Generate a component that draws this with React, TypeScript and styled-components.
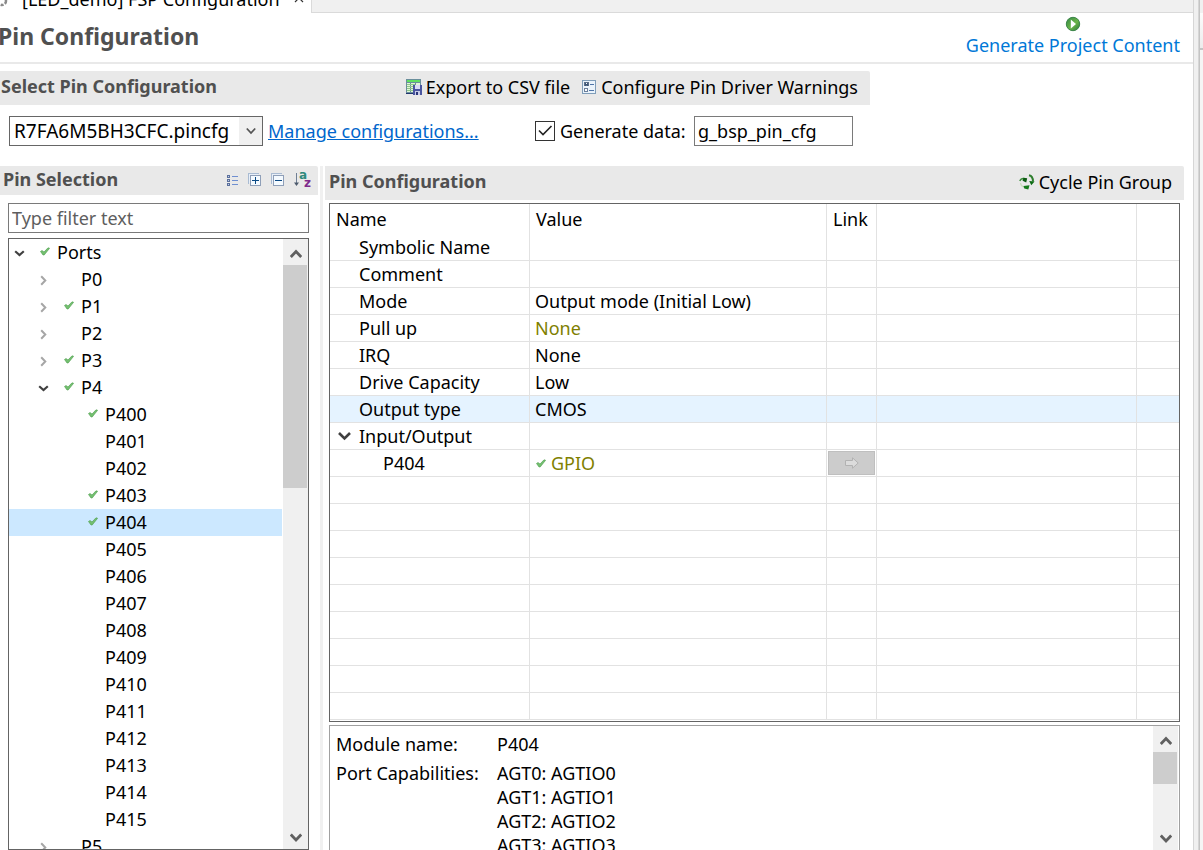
import React, { useState } from "react";
import styled, { createGlobalStyle } from "styled-components";

const Global = createGlobalStyle`
  * { box-sizing: border-box; }
  body { margin: 0; background: #fff; color: #000; font: 18px/24px "Noto Sans", "Open Sans", sans-serif; }
  button, input, select { font: inherit; color: inherit; margin: 0; }
`;

const Window = styled.div`
  display: flex;
  height: 100vh;
  overflow: hidden;
`;
const Editor = styled.main`
  flex: 1;
  min-width: 0;
  display: flex;
  flex-direction: column;
`;
const Sash = styled.div`
  width: 6px;
  background: #f0f0f0;
  border: solid #d6d6d6;
  border-width: 0 1px;
`;
const SideView = styled.aside`
  width: 4px;
  border-left: 1px solid #c4c4c4;
  background: #f5f5f5;
`;
const SideTop = styled.div`
  height: 50px;
  border-bottom: 2px solid #c4c4c4;
  background: linear-gradient(#f0f0f0 13px, #fcfcfc 13px, #ececec);
`;

const TabBar = styled.div`
  display: flex;
  height: 13px;
  background: #f0f0f0;
`;
const Tab = styled.div`
  display: flex;
  align-items: flex-end;
  width: 311px;
  height: 13px;
  padding-bottom: 2px;
  background: #fff;
  overflow: hidden;
  white-space: nowrap;
  gap: 14px;
`;
const TabIcon = styled.svg`
  flex: none;
  width: 14px;
  height: 16px;
  margin-left: -6px;
`;
const TabLabel = styled.span``;
const TabClose = styled.button`
  padding: 0;
  border: 0;
  background: none;
  height: 24px;
  display: flex;
  align-items: center;
`;
const TabRest = styled.div`
  flex: 1;
  border: solid #dadada;
  border-width: 0 0 1px 1px;
`;

const Header = styled.header`
  display: flex;
  justify-content: space-between;
  height: 51px;
  border-bottom: 2px solid #e9e9e9;
  padding-right: 13px;
`;
const Title = styled.h1`
  margin: 7px 0 0 -2px;
  font-size: 23px;
  line-height: 32px;
  font-weight: 700;
  color: #505050;
`;
const Generate = styled.button`
  display: flex;
  flex-direction: column;
  align-items: center;
  gap: 1px;
  padding: 3px 0 0;
  border: 0;
  background: none;
  color: #0078d7;
`;

const Bar = styled.div<{ $h: number; $pad: string }>`
  display: flex;
  align-items: center;
  justify-content: space-between;
  height: ${(p) => p.$h}px;
  padding: ${(p) => p.$pad};
  background: #e9e9e9;
  border-radius: 0 2px 0 0;
`;
const SelectBar = styled(Bar)`
  width: 870px;
  margin-top: 7px;
`;
const BarTitle = styled.h2`
  margin: 0;
  padding-bottom: 3px;
  font-size: 18px;
  line-height: 24px;
  font-weight: 700;
  color: #505050;
`;
const Tools = styled.div<{ $gap: number }>`
  display: flex;
  align-items: center;
  gap: ${(p) => p.$gap}px;
`;
const Tool = styled.button`
  display: flex;
  align-items: center;
  gap: 4px;
  padding: 0;
  border: 0;
  background: none;
`;

const FormRow = styled.form`
  display: flex;
  align-items: center;
  height: 30px;
  margin: 11px 0 0 9px;
`;
const Combo = styled.div`
  position: relative;
  width: 254px;
  height: 30px;
  svg { position: absolute; right: 7px; top: 11px; pointer-events: none; }
`;
const ComboSelect = styled.select`
  appearance: none;
  width: 100%;
  height: 30px;
  padding: 0 24px 0 4px;
  border: 1px solid #666;
  border-radius: 0;
  font-size: 19px;
  background: linear-gradient(to left, #f0f0f0 23px, #fff 23px);
`;
const ManageLink = styled.a`
  margin-left: 5px;
  width: 267px;
  color: #0066cc;
  text-decoration: underline;
`;
const CheckLabel = styled.label`
  position: relative;
  display: flex;
  align-items: center;
  gap: 5px;
  width: 159px;
  svg { position: absolute; left: 3px; top: 5px; visibility: hidden; pointer-events: none; }
  input:checked + svg { visibility: visible; }
`;
const CheckBox = styled.input`
  appearance: none;
  width: 20px;
  height: 20px;
  border: 1px solid #333;
  background: #fff;
`;
const TextField = styled.input<{ $w: string }>`
  width: ${(p) => p.$w};
  height: 30px;
  padding: 0 3px;
  border: 1px solid #7a7a7a;
  border-radius: 0;
  background: #fff;
  outline: 0;
  &::placeholder { color: #5e5e5e; opacity: 1; }
`;

const Body = styled.div`
  flex: 1;
  min-height: 0;
  display: flex;
  margin-top: 20px;
`;
const Left = styled.section`
  width: 318px;
  display: flex;
  flex-direction: column;
`;
const Divider = styled.div`
  width: 3px;
  margin: 0 2px;
  background: #f0f0f0;
`;
const Right = styled.section`
  flex: 1;
  min-width: 0;
  display: flex;
  flex-direction: column;
  padding-right: 9px;
`;
const LeftBody = styled.div`
  flex: 1;
  min-height: 0;
  display: flex;
  flex-direction: column;
  gap: 5px;
  padding: 8px 9px 0 8px;
`;
const TreeBox = styled.div`
  flex: 1;
  min-height: 0;
  display: flex;
  border: 1px solid #646464;
`;
const Tree = styled.ul`
  flex: 1;
  margin: 0 1px 0 0;
  padding: 0;
  list-style: none;
  overflow: hidden;
`;
const Node = styled.li<{ $level: number; $on?: boolean }>`
  display: flex;
  align-items: center;
  height: 27px;
  padding: 0 0 2px ${(p) => p.$level * 24}px;
  background: ${(p) => (p.$on ? "#cce8ff" : "transparent")};
`;
const Twisty = styled.button`
  width: 24px;
  height: 25px;
  padding: 4px 0 0 5px;
  border: 0;
  background: none;
  display: flex;
  align-items: center;
`;
const Slot = styled.span`
  width: 24px;
  display: flex;
  padding-left: 7px;
`;

const Scroll = styled.div`
  flex: none;
  width: 25px;
  display: flex;
  flex-direction: column;
  justify-content: space-between;
  background: #f0f0f0;
`;
const ScrollTop = styled.div<{ $thumb: number }>`
  padding-bottom: ${(p) => p.$thumb}px;
  background: linear-gradient(#cdcdcd, #cdcdcd) 0 26px / 24px ${(p) => p.$thumb}px no-repeat;
`;
const ScrollButton = styled.button`
  width: 25px;
  height: 26px;
  padding: 3px 0 0;
  border: 0;
  background: none;
  display: flex;
  align-items: center;
  justify-content: center;
`;

const TableBox = styled.div`
  flex: none;
  height: 519px;
  margin: 3px 4px 0;
  border: 1px solid #646464;
  overflow: hidden;
`;
const Grid = styled.table`
  width: 100%;
  table-layout: fixed;
  border-collapse: separate;
  border-spacing: 0;
  text-align: left;
  white-space: nowrap;
`;
const Th = styled.th`
  height: 30px;
  padding: 0 6px;
  font-weight: 400;
  border-right: 1px solid #e2e2e2;
  &:last-child { border-right: 0; }
`;
const Tr = styled.tr<{ $on?: boolean }>`
  background: ${(p) => (p.$on ? "#e5f3ff" : "transparent")};
`;
const Td = styled.td<{ $indent?: number; $olive?: boolean }>`
  height: 27px;
  padding: 0 0 0 ${(p) => p.$indent ?? 5}px;
  color: ${(p) => (p.$olive ? "#808000" : "inherit")};
  border: solid #e2e2e2;
  border-width: 0 1px 1px 0;
  &:last-child { border-right: 0; }
`;
const CellLine = styled.div<{ $gap: number }>`
  display: flex;
  align-items: center;
  gap: ${(p) => p.$gap}px;
`;
const LinkCell = styled(Td)`
  padding: 0 1px;
`;
const LinkButton = styled.button`
  display: flex;
  align-items: center;
  justify-content: center;
  width: 100%;
  height: 24px;
  padding: 0;
  border: 1px solid #bfbfbf;
  background: #ccc;
`;

const InfoBox = styled.div`
  flex: 1;
  min-height: 0;
  display: flex;
  margin: 3px 4px 0;
  border: solid #a0a0a0;
  border-width: 1px 1px 0;
  padding-right: 1px;
  overflow: hidden;
`;
const Info = styled.dl`
  flex: 1;
  margin: 0;
  padding: 6px 0 0 6px;
  display: grid;
  grid-template-columns: 161px 1fr;
  align-content: start;
  row-gap: 5px;
  overflow: hidden;
  dd { margin: 0; }
`;

const Check = () => (
  <svg width="10" height="9" viewBox="0 0 10 9" aria-hidden="true">
    <path d="M0.5 4.5 2 3.5 4 5 8 0.8 9.6 1.3 4.2 8 3 8Z" fill="#74c070" stroke="#4a9a4a" strokeWidth="0.6" />
  </svg>
);
const Open = () => (
  <svg width="11" height="7" viewBox="0 0 11 7" aria-hidden="true">
    <path d="M1.2 1.2 5.5 5 9.8 1.2" fill="none" stroke="#404040" strokeWidth="2.2" />
  </svg>
);
const Closed = () => (
  <svg width="11" height="11" viewBox="0 0 11 11" aria-hidden="true">
    <path d="M3.2 1.2 7.3 5.5 3.2 9.8" fill="none" stroke="#a6a6a6" strokeWidth="2" />
  </svg>
);
const Arrow = ({ up }: { up?: boolean }) => (
  <svg width="12" height="10" viewBox="0 0 12 10" aria-hidden="true">
    <path d={up ? "M0.8 8 6 2.5 11.2 8" : "M0.8 1.5 6 7 11.2 1.5"} fill="none" stroke="#606060" strokeWidth="2.8" />
  </svg>
);

const ScrollBar = ({ thumb }: { thumb: number }) => (
  <Scroll>
    <ScrollTop $thumb={thumb}>
      <ScrollButton aria-label="Scroll up"><Arrow up /></ScrollButton>
    </ScrollTop>
    <ScrollButton aria-label="Scroll down"><Arrow /></ScrollButton>
  </Scroll>
);

const Play = () => (
  <svg width="16" height="16" viewBox="0 0 16 16" aria-hidden="true">
    <defs>
      <linearGradient id="play" x1="0" y1="0" x2="1" y2="1">
        <stop offset="0" stopColor="#2f8545" />
        <stop offset="0.55" stopColor="#6cb548" />
        <stop offset="1" stopColor="#2c7a3c" />
      </linearGradient>
    </defs>
    <circle cx="8" cy="8" r="6.7" fill="url(#play)" stroke="#3b8549" />
    <path d="M5.800 3.500 11 8 5.800 12.500Z" fill="#fff" />
  </svg>
);
const CsvIcon = () => (
  <svg width="16" height="16" viewBox="0 0 16 16" shapeRendering="crispEdges" aria-hidden="true">
    <rect x="0" y="0" width="15" height="14" fill="#6a8f9c" />
    <rect x="1" y="1" width="13" height="2" fill="#5fe05f" />
    <g fill="#e2f5d8">
      <rect x="1" y="4" width="3" height="9" />
      <rect x="5" y="4" width="4" height="9" />
      <rect x="10" y="4" width="4" height="2" />
    </g>
    <g fill="#8fc888">
      <rect x="1" y="5" width="8" height="1" />
      <rect x="1" y="7" width="8" height="1" />
      <rect x="1" y="9" width="6" height="1" />
      <rect x="1" y="11" width="6" height="1" />
    </g>
    <rect x="0" y="14" width="7" height="1" fill="#22356e" />
    <rect x="7" y="6" width="9" height="10" fill="#4a559f" />
    <rect x="9" y="6" width="5" height="4" fill="#d8dcf4" />
    <rect x="9" y="12" width="5" height="4" fill="#c8cce8" />
    <rect x="10" y="13" width="2" height="3" fill="#2a3478" />
  </svg>
);
const WarnIcon = () => (
  <svg width="16" height="16" viewBox="0 0 16 16" shapeRendering="crispEdges" aria-hidden="true">
    <rect x="1.5" y="1.5" width="13" height="13" fill="#eaf3fb" stroke="#7f9db9" />
    <rect x="3.5" y="3.5" width="4" height="3" fill="#fff" stroke="#5b6f8a" />
    <path d="M4 4 7 6.5M7 4 4 6.5" stroke="#3f5878" />
    <rect x="3.5" y="9.5" width="3" height="3" fill="#fff" stroke="#6b7f9a" />
    <path d="M9 5.5H13M8 11.5H13" stroke="#4f74a8" />
  </svg>
);
const ListIcon = () => (
  <svg width="13" height="14" viewBox="0 0 13 14" shapeRendering="crispEdges" aria-hidden="true">
    {[1, 5, 9].map((y) => (
      <g key={y}>
        <rect x="1" y={y} width="3" height="3" fill="#5a6f9c" />
        <rect x="2" y={y + 1} width="1" height="1" fill="#c4cfe6" />
        <rect x="6" y={y + 1} width="6" height="1" fill="#6f8fd0" />
      </g>
    ))}
  </svg>
);
const BoxIcon = ({ plus }: { plus?: boolean }) => (
  <svg width="14" height="16" viewBox="0 0 14 16" shapeRendering="crispEdges" aria-hidden="true">
    <path d="M0.5 10.5V0.5H10.5" fill="none" stroke="#a9bbd2" />
    <path d="M1.5 10V1.5H10" fill="none" stroke="#e8eff8" />
    <rect x="2.5" y="2.5" width="10" height="10" fill="#f4faff" stroke="#8f9fb8" />
    <path d={plus ? "M4 7.5H11M7.5 4V11" : "M4 7.5H11"} stroke="#0b4a85" />
  </svg>
);
const AzText = styled.text`
  font: 700 12px "DejaVu Sans", sans-serif;
`;
const SortIcon = () => (
  <svg width="17" height="18" viewBox="0 0 17 18" aria-hidden="true">
    <path d="M2.5 1V13" stroke="#6f7f94" />
    <path d="M0 10.5H5L2.5 14Z" fill="#4c5a6c" />
    <AzText x="5" y="7" fill="#2f8a7c">a</AzText>
    <AzText x="10" y="15" fill="#7f2a8c">z</AzText>
  </svg>
);
const CycleIcon = () => (
  <svg width="16" height="16" viewBox="0 0 16 16" aria-hidden="true">
    <path d="M0.800 7Q2 4 5.500 4.600" fill="none" stroke="#3f8f3f" strokeWidth="1.400" />
    <path d="M4.500 3.800 8.200 4.200 7.200 8.600 3.600 6.800Z" fill="#0d5c12" />
    <path d="M10 1.200Q14 2 14 7.500" fill="none" stroke="#2f7f2f" strokeWidth="2" />
    <path d="M10.200 7 15.600 7.500 12.300 11.200Z" fill="#0d6c14" />
    <path d="M1.500 9Q2 12.500 5 13.200" fill="none" stroke="#c7dcbc" strokeWidth="1.200" />
    <path d="M4.500 12 10.500 11.200 9.300 15.600 5.300 14.600Z" fill="#147a1a" />
  </svg>
);

type Item = { name: string; level: number; check?: boolean; open?: boolean; leaf?: boolean };
const checked = ["P1", "P3", "P4", "P400", "P403", "P404"];
const nodes: Item[] = [
  { name: "Ports", level: 0, open: true, check: true },
  ...["P0", "P1", "P2", "P3", "P4"].map((name) => ({ name, level: 1, open: name === "P4", check: checked.includes(name) })),
  ...Array.from({ length: 16 }, (_, i) => `P4${String(i).padStart(2, "0")}`).map((name) => ({
    name, level: 2, leaf: true, check: checked.includes(name),
  })),
  { name: "P5", level: 1 },
];

type Row = { name: string; value?: string; olive?: boolean };
const rows: Row[] = [
  { name: "Symbolic Name" },
  { name: "Comment" },
  { name: "Mode", value: "Output mode (Initial Low)" },
  { name: "Pull up", value: "None", olive: true },
  { name: "IRQ", value: "None" },
  { name: "Drive Capacity", value: "Low" },
  { name: "Output type", value: "CMOS" },
];
const BLANK_ROWS = 9;

export default function App() {
  const [selected, setSelected] = useState("P404");
  return (
    <Window>
      <Global />
      <Editor>
        <TabBar>
          <Tab>
            <TabIcon viewBox="0 0 14 16" aria-hidden="true">
              <circle cx="8" cy="6" r="4" fill="none" stroke="#8a8a8a" strokeWidth="2.5" strokeDasharray="3 1.5" />
            </TabIcon>
            <TabLabel>[LED_demo] FSP Configuration</TabLabel>
            <TabClose aria-label="Close tab">
              <svg width="10" height="10" viewBox="0 0 10 10" aria-hidden="true">
                <path d="M1 0 9 8M9 0 1 8" stroke="#333" strokeWidth="1.2" />
              </svg>
            </TabClose>
          </Tab>
          <TabRest />
        </TabBar>
        <Header>
          <Title>Pin Configuration</Title>
          <Generate><Play />Generate Project Content</Generate>
        </Header>

        <SelectBar $h={34} $pad="0 12px 2px 1px">
          <BarTitle>Select Pin Configuration</BarTitle>
          <Tools $gap={11}>
            <Tool><CsvIcon />Export to CSV file</Tool>
            <Tool><WarnIcon />Configure Pin Driver Warnings</Tool>
          </Tools>
        </SelectBar>
        <FormRow>
          <Combo>
            <ComboSelect aria-label="Pin configuration file">
              <option>R7FA6M5BH3CFC.pincfg</option>
            </ComboSelect>
            <svg width="10" height="8" viewBox="0 0 10 8" aria-hidden="true">
              <path d="M0.8 1.5 5 6 9.2 1.5" fill="none" stroke="#555" strokeWidth="1.8" />
            </svg>
          </Combo>
          <ManageLink href="#manage">Manage configurations...</ManageLink>
          <CheckLabel>
            <CheckBox type="checkbox" defaultChecked />
            <svg width="15" height="13" viewBox="0 0 15 13" aria-hidden="true">
              <path d="M1 6.5 5 10.5 13.5 2" fill="none" stroke="#222" strokeWidth="1.6" />
            </svg>
            Generate data:
          </CheckLabel>
          <TextField $w="159px" aria-label="Generated data name" defaultValue="g_bsp_pin_cfg" />
        </FormRow>

        <Body>
          <Left>
            <Bar $h={29} $pad="0 7px 0 3px">
              <BarTitle>Pin Selection</BarTitle>
              <Tools $gap={9}>
                <Tool aria-label="List view"><ListIcon /></Tool>
                <Tool aria-label="Expand all"><BoxIcon plus /></Tool>
                <Tool aria-label="Collapse all"><BoxIcon /></Tool>
                <Tool aria-label="Sort"><SortIcon /></Tool>
              </Tools>
            </Bar>
            <LeftBody>
              <TextField $w="100%" placeholder="Type filter text" aria-label="Filter pins" />
              <TreeBox>
                <Tree role="tree">
                  {nodes.map((n) => (
                    <Node
                      key={n.name}
                      role="treeitem"
                      aria-selected={n.name === selected}
                      $level={n.leaf ? 3 : n.level}
                      $on={n.name === selected}
                      onClick={() => setSelected(n.name)}
                    >
                      {!n.leaf && (
                        <Twisty aria-label={`Toggle ${n.name}`}>{n.open ? <Open /> : <Closed />}</Twisty>
                      )}
                      <Slot>{n.check && <Check />}</Slot>
                      {n.name}
                    </Node>
                  ))}
                </Tree>
                <ScrollBar thumb={223} />
              </TreeBox>
            </LeftBody>
          </Left>
          <Divider />
          <Right>
            <Bar $h={34} $pad="0 12px 2px 4px">
              <BarTitle>Pin Configuration</BarTitle>
              <Tool><CycleIcon />Cycle Pin Group</Tool>
            </Bar>
            <TableBox>
              <Grid>
                <colgroup>
                  <col width="200" /><col width="297" /><col width="50" /><col width="260" /><col />
                </colgroup>
                <thead>
                  <tr><Th>Name</Th><Th>Value</Th><Th>Link</Th><Th /><Th /></tr>
                </thead>
                <tbody>
                  {rows.map((r) => (
                    <Tr key={r.name} $on={r.name === "Output type"}>
                      <Td $indent={29}>{r.name}</Td>
                      <Td $olive={r.olive}>{r.value}</Td>
                      <Td /><Td /><Td />
                    </Tr>
                  ))}
                  <Tr>
                    <Td $indent={8}>
                      <CellLine $gap={8}>
                        <svg width="13" height="10" viewBox="0 0 13 10" aria-hidden="true">
                          <path d="M1 2 6.5 7.5 12 2" fill="none" stroke="#404040" strokeWidth="2.6" />
                        </svg>
                        Input/Output
                      </CellLine>
                    </Td>
                    <Td /><Td /><Td /><Td />
                  </Tr>
                  <Tr>
                    <Td $indent={53}>P404</Td>
                    <Td $indent={6} $olive><CellLine $gap={5}><Check />GPIO</CellLine></Td>
                    <LinkCell>
                      <LinkButton aria-label="Go to linked item" disabled>
                        <svg width="14" height="12" viewBox="0 0 14 12" aria-hidden="true">
                          <path d="M0.5 3.5H7.5V0.8L13.2 6 7.5 11.2V8.5H0.5Z" fill="#dcdcdc" stroke="#b2b2b2" />
                        </svg>
                      </LinkButton>
                    </LinkCell>
                    <Td /><Td />
                  </Tr>
                  {Array.from({ length: BLANK_ROWS }, (_, i) => (
                    <Tr key={i}><Td /><Td /><Td /><Td /><Td /></Tr>
                  ))}
                </tbody>
              </Grid>
            </TableBox>
            <InfoBox>
              <Info>
                <dt>Module name:</dt>
                <dd>P404</dd>
                <dt>Port Capabilities:</dt>
                <dd>
                  {["AGT0: AGTIO0", "AGT1: AGTIO1", "AGT2: AGTIO2", "AGT3: AGTIO3"].map((c) => (
                    <div key={c}>{c}</div>
                  ))}
                </dd>
              </Info>
              <ScrollBar thumb={32} />
            </InfoBox>
          </Right>
        </Body>
      </Editor>
      <Sash />
      <SideView><SideTop /></SideView>
    </Window>
  );
}
